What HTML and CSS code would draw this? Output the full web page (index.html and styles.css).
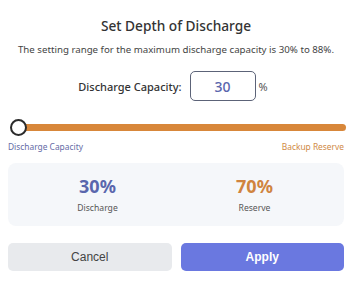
FILE: index.html
```html
<!DOCTYPE html>
<html lang="en">
<head>
    <meta charset="UTF-8">
    <meta name="viewport" content="width=device-width, initial-scale=1.0">
    <title>Set Depth of Discharge</title>
    <link rel="stylesheet" href="styles.css">
</head>
<body>
    <div class="dialog">
        <h1>Set Depth of Discharge</h1>
        <p class="hint">The setting range for the maximum discharge capacity is 30% to 88%.</p>

        <div class="field">
            <label for="capacity">Discharge Capacity:</label>
            <input type="text" id="capacity" value="30">
            <span class="unit">%</span>
        </div>

        <div class="slider">
            <div class="track"></div>
            <div class="thumb"></div>
        </div>
        <div class="slider-labels">
            <span class="lbl-discharge">Discharge Capacity</span>
            <span class="lbl-reserve">Backup Reserve</span>
        </div>

        <div class="stats">
            <div class="stat">
                <div class="value discharge">30%</div>
                <div class="caption">Discharge</div>
            </div>
            <div class="stat">
                <div class="value reserve">70%</div>
                <div class="caption">Reserve</div>
            </div>
        </div>

        <div class="actions">
            <button class="btn btn-cancel">Cancel</button>
            <button class="btn btn-apply">Apply</button>
        </div>
    </div>
</body>
</html>
```
FILE: styles.css
```css
body {
    font-family: "Noto Sans", "Open Sans", sans-serif;
    margin: 0;
    padding: 0;
    background-color: #fff;
    color: #333;
}

.dialog {
    padding: 15px 12px 0 8px;
}

h1 {
    margin: 0;
    font-size: 13.7px;
    font-weight: 500;
    text-align: center;
    color: #333;
    line-height: 22px;
}

.hint {
    margin: 6px 0 0;
    font-size: 9.7px;
    text-align: center;
    color: #444;
    line-height: 14px;
}

.field {
    display: flex;
    align-items: center;
    justify-content: center;
    margin-top: 14px;
    gap: 8px;
    padding-right: 6px;
}

.field label {
    font-size: 11px;
    font-weight: 500;
    color: #333;
}

.field input {
    width: 66px;
    height: 30px;
    box-sizing: border-box;
    border: 1px solid #5c6378;
    border-radius: 5px;
    text-align: center;
    font-family: inherit;
    font-size: 14px;
    font-weight: 500;
    color: #5a66ad;
    padding: 0;
}

.unit {
    font-size: 11px;
    color: #555;
    margin-left: -5px;
}

.slider {
    position: relative;
    height: 18px;
    margin-top: 17px;
}

.track {
    position: absolute;
    left: 8px;
    right: -2px;
    top: 6px;
    height: 7px;
    border-radius: 4px;
    background-color: #d8873a;
}

.thumb {
    position: absolute;
    left: 2px;
    top: 1px;
    width: 13px;
    height: 13px;
    border: 2px solid #2b2b2b;
    border-radius: 50%;
    background-color: #fff;
}

.slider-labels {
    display: flex;
    justify-content: space-between;
    font-size: 8.4px;
    margin-top: 5px;
}

.lbl-discharge {
    color: #656ba6;
}

.lbl-reserve {
    color: #d08a45;
}

.stats {
    display: flex;
    margin-top: 11px;
    padding: 0 11px;
    height: 63px;
    background-color: #f5f7fa;
    border-radius: 8px;
}

.stat {
    flex: 1;
    display: flex;
    flex-direction: column;
    align-items: center;
    justify-content: center;
}

.value {
    font-size: 18px;
    font-weight: 700;
    line-height: 22px;
}

.value.discharge {
    color: #5a66ad;
}

.value.reserve {
    color: #d0843f;
}

.caption {
    font-size: 8.6px;
    color: #555;
    margin-top: 5px;
}

.actions {
    display: flex;
    gap: 9px;
    margin-top: 17px;
}

.btn {
    flex: 1;
    height: 28px;
    border: none;
    border-radius: 5px;
    font-family: "Liberation Sans", Arial, sans-serif;
    font-size: 12px;
}

.btn-cancel {
    background-color: #e8eaed;
    color: #444;
}

.btn-apply {
    background-color: #6a78e0;
    color: #fff;
    font-weight: 700;
}
```
